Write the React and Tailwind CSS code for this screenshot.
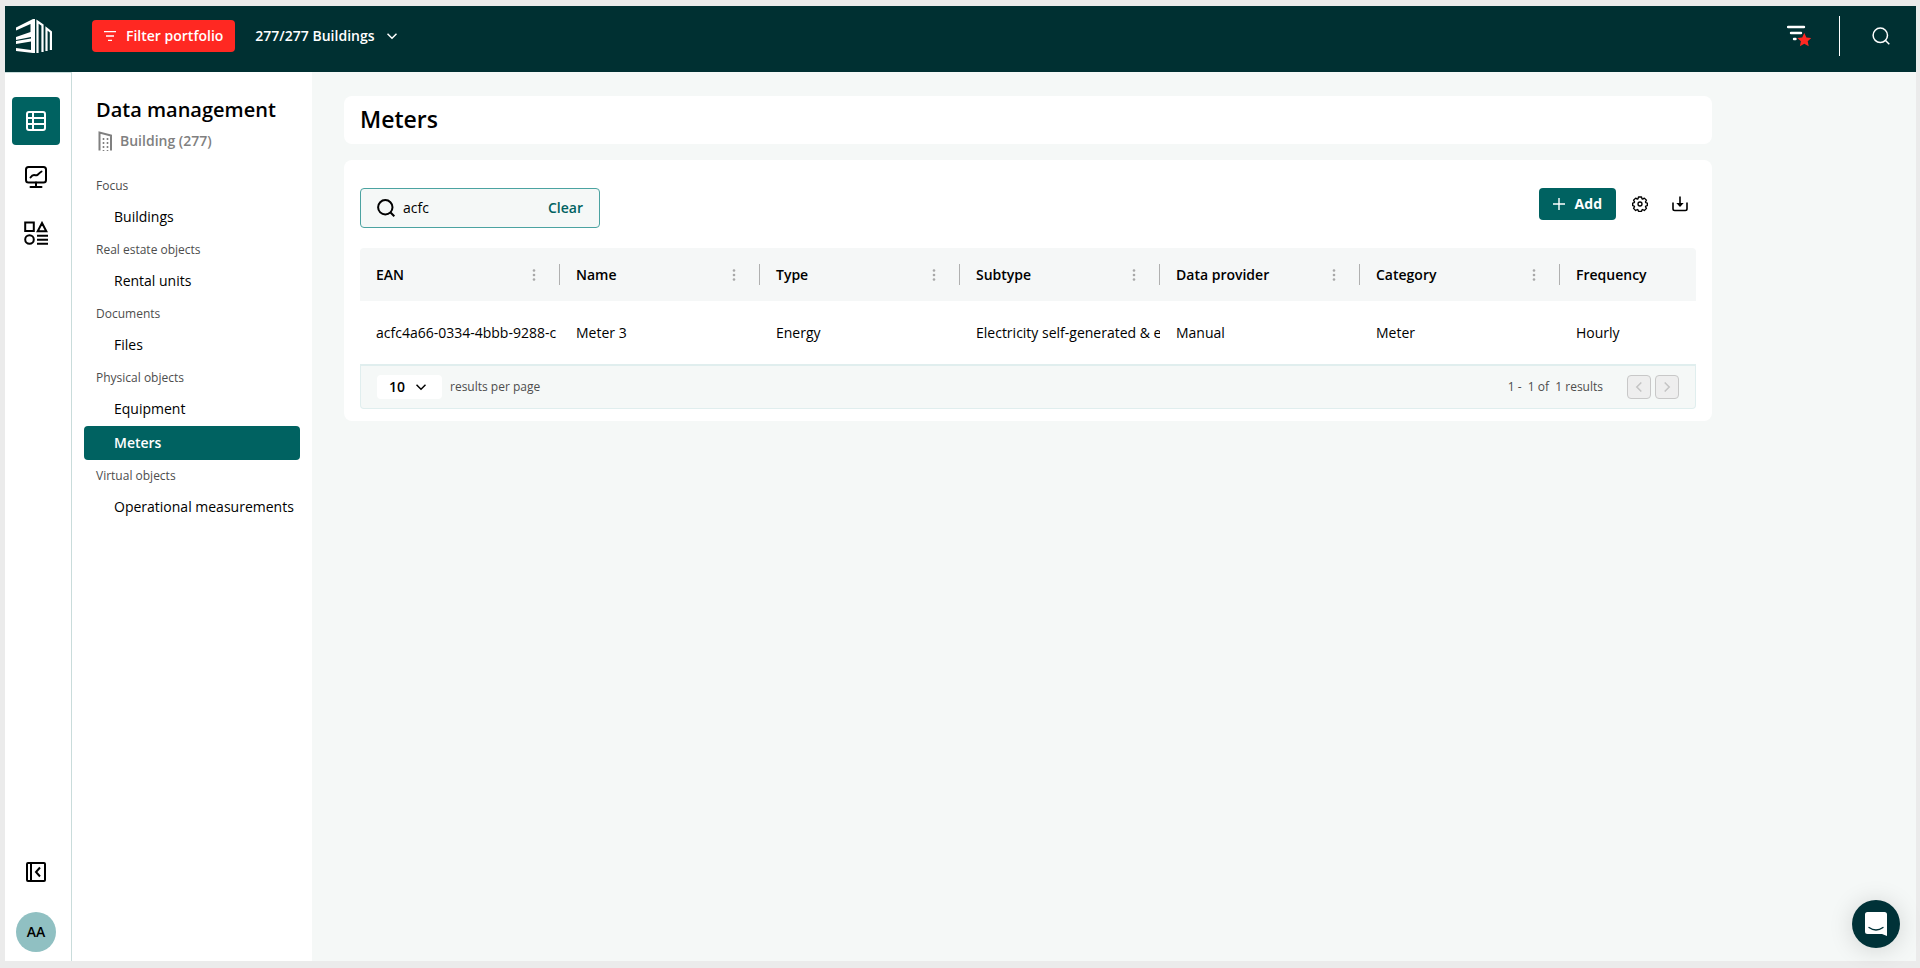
import { useState } from 'react'

const railItems = [
  { id: 'data', label: 'Data management', Icon: TableIcon },
  { id: 'dashboards', label: 'Dashboards', Icon: MonitorIcon },
  { id: 'objects', label: 'Objects', Icon: ShapesIcon },
]

const menuGroups = [
  { title: 'Focus', items: ['Buildings'] },
  { title: 'Real estate objects', items: ['Rental units'] },
  { title: 'Documents', items: ['Files'] },
  { title: 'Physical objects', items: ['Equipment', 'Meters'] },
  { title: 'Virtual objects', items: ['Operational measurements'] },
]

const columns = ['EAN', 'Name', 'Type', 'Subtype', 'Data provider', 'Category', 'Frequency']

const rows = [
  ['acfc4a66-0334-4bbb-9288-c', 'Meter 3', 'Energy', 'Electricity self-generated & e', 'Manual', 'Meter', 'Hourly'],
]

function Logo() {
  return (
    <svg width="36" height="34" viewBox="0 0 36 34" fill="none" stroke="#fff" aria-hidden="true">
      <path d="M0 11.500V8.500L17 0h2v34h-2L0 32v-3l15 2V22.500L0 25v-3l15-2.500v-1.500L0 21v-3l14.500-5V5z" fill="#fff" stroke="none" />
      <path d="M21.5 34V2.5L26.5 6v27" strokeWidth="2.2" />
      <path d="M30.5 32V9.5l4.400 3.5V31" strokeWidth="2.2" />
    </svg>
  )
}

function TableIcon() {
  return (
    <svg width="20" height="20" viewBox="0 0 20 20" fill="none" stroke="currentColor" strokeWidth="2" aria-hidden="true">
      <rect x="1" y="1" width="18" height="18" rx="2" />
      <path d="M7 1v18M1 7h18M1 13h18" />
    </svg>
  )
}

function MonitorIcon() {
  return (
    <svg width="22" height="22" viewBox="0 0 22 22" fill="none" stroke="currentColor" strokeWidth="2" strokeLinecap="round" aria-hidden="true">
      <rect x="1" y="1" width="20" height="15.5" rx="2.5" />
      <path d="M11 16.5V21M5.5 21h11" />
      <path d="M5.5 11.5c1-1.500 2-2.500 3.500-2.500s2 .8 3.500-.2c1.500-1 2.500-2.800 4-3.200" />
    </svg>
  )
}

function ShapesIcon() {
  return (
    <svg width="24" height="24" viewBox="0 0 24 24" fill="none" stroke="currentColor" strokeWidth="2" aria-hidden="true">
      <path d="M1.200 1.500h8.600v8.600H1.200zM18 2l4.300 8.200h-8.600z" />
      <circle cx="5.500" cy="18.500" r="4.300" />
      <path d="M13 14.800h11M13 18.800h11M13 22.800h11" />
    </svg>
  )
}

function BuildingIcon() {
  return (
    <svg width="16" height="20" viewBox="0 0 16 20" fill="none" stroke="currentColor" aria-hidden="true">
      <path d="M3.500 19.500V1.500L15 4.500v15" strokeWidth="2" />
      <path d="M7.500 7v13M11.500 7v13" strokeWidth="1.600" strokeDasharray="2 2" />
    </svg>
  )
}

function FilterIcon() {
  return (
    <svg width="12" height="10" viewBox="0 0 12 10" stroke="currentColor" strokeWidth="1.300" aria-hidden="true">
      <path d="M0 .7h12M2 5h8M4 9.300h4" />
    </svg>
  )
}

function FavouriteFilterIcon() {
  return (
    <svg width="24" height="22" viewBox="0 0 24 22" aria-hidden="true">
      <path d="M1 2h16M4 8h10M7 14h1.500" stroke="#fff" strokeWidth="2.400" strokeLinecap="round" />
      <path d="m17.300 8 2.100 4.400 4.900.6-3.600 3.300 1 4.900-4.400-2.500-4.400 2.500 1-4.900-3.600-3.300 4.900-.6z" fill="#ff2822" />
    </svg>
  )
}

function SearchIcon({ size = 18, stroke = 1.5 }) {
  return (
    <svg width={size} height={size} viewBox="0 0 18 18" fill="none" stroke="currentColor" strokeWidth={stroke} aria-hidden="true">
      <circle cx="8.300" cy="8.300" r="7.200" />
      <path d="m13.300 13.300 4 4" />
    </svg>
  )
}

function Chevron({ className = '' }) {
  return (
    <svg className={className} width="10" height="10" viewBox="0 0 10 10" fill="none" stroke="currentColor" strokeWidth="1.500" aria-hidden="true">
      <path d="M.5 2.700 5 7.200l4.500-4.500" />
    </svg>
  )
}

function CollapseIcon() {
  return (
    <svg width="20" height="20" viewBox="0 0 20 20" fill="none" stroke="currentColor" strokeWidth="2" aria-hidden="true">
      <rect x="1" y="1" width="18" height="18" rx="1" />
      <path d="M5 1v18" />
      <path d="m14 5.500-4 4.500 4 4.500" />
    </svg>
  )
}

function GearIcon() {
  return (
    <svg width="16" height="16" viewBox="0 0 24 24" fill="none" stroke="currentColor" strokeWidth="2" strokeLinejoin="round" aria-hidden="true">
      <path d="M9.700 1.500h4.600l.7 2.800 1 .4 2.500-1.500 3.200 3.200-1.500 2.500.4 1 2.400.7v3.800l-2.400.7-.4 1 1.500 2.500-3.200 3.200-2.500-1.500-1 .4-.7 2.300H9.700L9 20.700l-1-.4-2.500 1.500-3.200-3.200 1.500-2.500-.4-1-2.400-.7v-3.800l2.400-.7.4-1-1.500-2.500 3.200-3.200L8 4.700l1-.4z" />
      <circle cx="12" cy="12" r="3" />
    </svg>
  )
}

function DownloadIcon() {
  return (
    <svg width="16" height="16" viewBox="0 0 16 16" fill="none" stroke="currentColor" strokeWidth="1.600" aria-hidden="true">
      <path d="M1 6.500v6.300q0 1.700 1.700 1.700h10.600q1.700 0 1.700-1.700V6.500" />
      <path d="M8 .5V9" />
      <path d="M4.300 7h7.400L8 11z" fill="currentColor" stroke="none" />
    </svg>
  )
}

function Header() {
  return (
    <header className="flex h-[66px] items-start justify-between bg-[#003032] pl-[11px] pr-[26px] text-white">
      <div className="flex items-start pt-[13px]">
        <a href="#home" aria-label="Home">
          <Logo />
        </a>
        <div className="ml-10 flex items-center gap-5 pt-px">
          <button type="button" className="flex h-8 items-center gap-2.5 rounded bg-[#ff2822] px-3 text-sm font-semibold">
            <FilterIcon />
            Filter portfolio
          </button>
          <button type="button" className="flex h-8 items-center gap-3 text-sm font-semibold">
            277/277 Buildings
            <Chevron />
          </button>
        </div>
      </div>
      <div className="flex h-[60px] items-center">
        <button type="button" aria-label="Saved filters">
          <FavouriteFilterIcon />
        </button>
        <div className="mx-7 h-10 w-px bg-white" />
        <button type="button" className="ml-1" aria-label="Search">
          <SearchIcon />
        </button>
      </div>
    </header>
  )
}

function Rail() {
  return (
    <nav className="flex w-[67px] shrink-0 flex-col items-center justify-between border-t border-r border-[#c9dcdb] bg-white pt-6 pr-1 pb-[9px]">
      <div className="flex flex-col gap-2">
        {railItems.map(({ id, label, Icon }) => (
          <button
            key={id}
            type="button"
            aria-label={label}
            className={`flex size-12 items-center justify-center rounded ${id === 'data' ? 'bg-[#006261] text-white' : 'text-black'}`}
          >
            <Icon />
          </button>
        ))}
      </div>
      <div className="flex flex-col items-center gap-[30px]">
        <button type="button" aria-label="Collapse menu">
          <CollapseIcon />
        </button>
        <button type="button" className="size-10 rounded-full bg-[#90c0c2] text-sm font-semibold">
          AA
        </button>
      </div>
    </nav>
  )
}

function Sidebar() {
  return (
    <aside className="w-60 shrink-0 bg-white px-3 pt-6">
      <h2 className="px-3 text-xl leading-7 font-semibold">Data management</h2>
      <p className="flex h-[34px] items-center gap-2 px-3 text-sm font-semibold text-[#808080]">
        <BuildingIcon />
        Building (277)
      </p>
      <nav className="mt-3">
        {menuGroups.map((group) => (
          <div key={group.title}>
            <h3 className="px-3 pt-0.5 text-xs leading-7 font-medium text-[#4d4d4d]">{group.title}</h3>
            {group.items.map((item) => (
              <a
                key={item}
                href="#menu"
                className={`block rounded pl-[30px] text-sm leading-[34px] whitespace-nowrap ${item === 'Meters' ? 'bg-[#006261] font-semibold text-white' : 'text-black'}`}
              >
                {item}
              </a>
            ))}
          </div>
        ))}
      </nav>
    </aside>
  )
}

function Toolbar() {
  const [query, setQuery] = useState('acfc')

  return (
    <div className="flex items-start justify-between">
      <div className="flex h-10 w-60 items-center rounded border border-[#4ba3a1] bg-[#f5f8f7] px-4">
        <SearchIcon stroke={2} />
        <input
          type="text"
          aria-label="Search meters"
          value={query}
          onChange={(e) => setQuery(e.target.value)}
          className="ml-2 min-w-0 flex-1 bg-transparent text-sm outline-none"
        />
        <button type="button" onClick={() => setQuery('')} className="text-sm font-semibold text-[#006261]">
          Clear
        </button>
      </div>
      <div className="flex items-center gap-4 pr-2">
        <button type="button" className="flex h-8 items-center gap-2.5 rounded bg-[#006261] px-[14px] text-sm font-bold text-white">
          <svg width="12" height="12" viewBox="0 0 12 12" stroke="currentColor" strokeWidth="1.400" aria-hidden="true">
            <path d="M6 0v12M0 6h12" />
          </svg>
          Add
        </button>
        <button type="button" aria-label="Table settings">
          <GearIcon />
        </button>
        <button type="button" className="ml-2" aria-label="Download">
          <DownloadIcon />
        </button>
      </div>
    </div>
  )
}

function MetersTable() {
  return (
    <div className="mt-5 overflow-hidden rounded-t">
      <table className="w-[1400px] table-fixed border-collapse text-left text-sm">
        <thead className="bg-[#f5f7f7]">
          <tr>
            {columns.map((column) => (
              <th key={column} className="h-[53px] p-0 font-semibold">
                <div className="flex h-[21px] items-center justify-between border-r border-[#b0b0b0] pr-[22px] pl-4">
                  {column}
                  <button type="button" aria-label={`${column} options`} className="text-[#a8a8a8]">
                    <svg width="6" height="12" viewBox="0 0 6 12" fill="currentColor" aria-hidden="true">
                      <circle cx="3" cy="1.500" r="1.300" />
                      <circle cx="3" cy="6" r="1.300" />
                      <circle cx="3" cy="10.500" r="1.300" />
                    </svg>
                  </button>
                </div>
              </th>
            ))}
          </tr>
        </thead>
        <tbody>
          {rows.map((row) => (
            <tr key={row[0]}>
              {row.map((value, i) => (
                <td key={columns[i]} className="h-[63px] overflow-hidden py-0 pr-0 pl-4 whitespace-nowrap">
                  {value}
                </td>
              ))}
            </tr>
          ))}
        </tbody>
      </table>
    </div>
  )
}

function Pagination() {
  return (
    <div className="flex h-[45px] items-center justify-between rounded-b border border-t-2 border-[#e0eeee] bg-[#f5f8f7] px-4 text-xs font-medium text-[#4d4d4d]">
      <label className="flex items-center gap-2">
        <span className="relative flex items-center text-black">
          <select defaultValue="10" className="h-6 w-[65px] appearance-none rounded bg-white pl-3 text-sm font-semibold">
            <option>10</option>
            <option>25</option>
            <option>50</option>
          </select>
          <Chevron className="pointer-events-none absolute right-4" />
        </span>
        results per page
      </label>
      <div className="flex items-center gap-1">
        <span className="mr-5 whitespace-pre">1 -  1 of  1 results</span>
        <button type="button" disabled aria-label="Previous page" className="flex size-6 items-center justify-center rounded border border-[#c8c8c8] bg-[#eeeeee] text-[#c4c4c4]">
          <Chevron className="rotate-90" />
        </button>
        <button type="button" disabled aria-label="Next page" className="flex size-6 items-center justify-center rounded border border-[#c8c8c8] bg-[#eeeeee] text-[#c4c4c4]">
          <Chevron className="-rotate-90" />
        </button>
      </div>
    </div>
  )
}

function ChatButton() {
  return (
    <button
      type="button"
      aria-label="Open chat"
      className="fixed right-5 bottom-5 flex size-12 items-center justify-center rounded-full bg-[#003238] shadow-[0_2px_24px_rgba(0,0,0,0.15)]"
    >
      <svg width="22" height="24" viewBox="0 0 22 24" aria-hidden="true">
        <path d="M2.500 0h17Q22 0 22 2.500V24l-5-2H2.500Q0 22 0 19.500v-17Q0 0 2.500 0z" fill="#fff" />
        <path d="M4 15.500q7 5 14 0" fill="none" stroke="#003238" strokeWidth="1.300" strokeLinecap="round" />
      </svg>
    </button>
  )
}

export default function App() {
  return (
    <div className="flex min-h-screen flex-col bg-[#ebebeb] pt-1.5 pr-1 pb-[7px] pl-[5px] font-['Open_Sans',sans-serif] text-black">
      <Header />
      <div className="flex flex-1">
        <Rail />
        <Sidebar />
        <main className="min-w-0 flex-1 bg-[#f5f8f7] px-8 pt-6">
          <div className="flex max-w-[1368px] flex-col gap-4">
            <div className="rounded-lg bg-white px-4 pb-0.5">
              <h1 className="text-[23px] leading-[46px] font-semibold">Meters</h1>
            </div>
            <section className="rounded-lg bg-white px-4 pt-7 pb-3">
              <Toolbar />
              <MetersTable />
              <Pagination />
            </section>
          </div>
        </main>
      </div>
      <ChatButton />
    </div>
  )
}
